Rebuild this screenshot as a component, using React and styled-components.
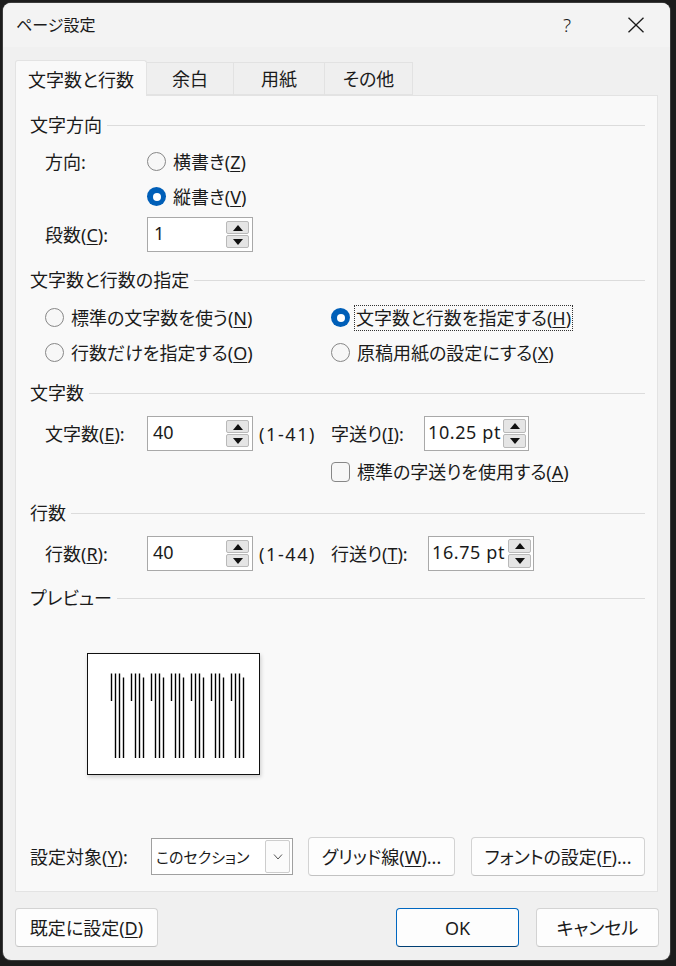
import React from 'react';
import styled, { createGlobalStyle } from 'styled-components';

const GlobalStyle = createGlobalStyle`
  body {
    margin: 0;
    background: #1c1c1c;
    font-family: "Noto Sans", "Noto Sans CJK JP", sans-serif;
    font-feature-settings: "palt" 1;
    color: #1b1b1b;
  }
`;

const Screen = styled.div`
  padding: 3px 0 0 3px;
  height: 966px;
  box-sizing: border-box;
`;

const Dialog = styled.div`
  width: 667px;
  height: 957px;
  background: #f0f0f0;
  border-radius: 8px;
  box-shadow: 0 0 0 1px #3c3c3c;
  display: flex;
  flex-direction: column;
  overflow: hidden;
`;

const TitleBar = styled.div`
  height: 44px;
  display: flex;
  align-items: center;
  padding: 0 11px 0 13px;
  background: #f3f3f3;
  font-size: 16px;
  line-height: 22px;
`;

const Title = styled.div`
  flex: 1;
`;

const TitleButton = styled.div`
  width: 46px;
  height: 44px;
  display: flex;
  align-items: center;
  justify-content: center;
  margin-right: ${(p) => p.$mr || 0}px;
  font-size: 19px;
  font-weight: 300;
`;

const TabRow = styled.div`
  display: flex;
  align-items: flex-end;
  height: 35px;
  margin: 13px 12px 0;
`;

const Tab = styled.div`
  width: ${(p) => p.$w}px;
  height: ${(p) => (p.$active ? 36 : 33)}px;
  margin-bottom: ${(p) => (p.$active ? -1 : 0)}px;
  box-sizing: border-box;
  display: flex;
  align-items: center;
  justify-content: center;
  font-size: 18px;
  line-height: 22px;
  background: ${(p) => (p.$active ? '#f9f9f9' : '#efefef')};
  border: 1px solid ${(p) => (p.$active ? '#e3e3e3' : '#e2e2e2')};
  border-bottom: ${(p) => (p.$active ? 'none' : '1px solid #e3e3e3')};
  border-left: ${(p) => (p.$first ? undefined : p.$active ? undefined : 'none')};
  border-radius: ${(p) => (p.$active ? '3px 3px 0 0' : '0')};
  position: relative;
  z-index: ${(p) => (p.$active ? 1 : 0)};
  padding-top: ${(p) => (p.$active ? 2 : 0)}px;
`;

const Panel = styled.div`
  margin: 0 12px;
  height: 797px;
  box-sizing: border-box;
  background: #f9f9f9;
  border: 1px solid #e3e3e3;
  padding: 17px 12px 15px 14px;
  display: flex;
  flex-direction: column;
  font-size: 18px;
  line-height: 22px;
`;

const Header = styled.div`
  display: flex;
  align-items: center;
  gap: 5px;
  height: 24px;
  margin-top: ${(p) => p.$mt || 0}px;
  &::after {
    content: '';
    flex: 1;
    height: 1px;
    background: #dcdcdc;
  }
`;

const Group = styled.div`
  padding-left: 15px;
  margin-top: ${(p) => p.$mt || 0}px;
  display: flex;
  flex-direction: column;
`;

const Row = styled.div`
  display: flex;
  align-items: center;
  height: 35px;
  margin-top: ${(p) => p.$mt || 0}px;
  padding-left: ${(p) => p.$pl || 0}px;
`;

const Label = styled.div`
  width: ${(p) => p.$w}px;
  flex: none;
  padding-left: ${(p) => p.$pl || 0}px;
  box-sizing: border-box;
  white-space: nowrap;
`;

const U = styled.span`
  text-decoration: underline;
  text-underline-offset: 2px;
  text-decoration-thickness: 1px;
`;

const RadioItem = styled.div`
  display: flex;
  align-items: center;
  gap: ${(p) => p.$gap ?? 7}px;
  width: ${(p) => (p.$w ? `${p.$w}px` : 'auto')};
  white-space: nowrap;
`;

const RadioCircle = styled.span`
  width: 19px;
  height: 19px;
  border-radius: 50%;
  box-sizing: border-box;
  flex: none;
  display: flex;
  align-items: center;
  justify-content: center;
  background: ${(p) => (p.$on ? '#005fb8' : '#f7f7f7')};
  border: ${(p) => (p.$on ? 'none' : '1px solid #878787')};
  &::after {
    content: '';
    display: ${(p) => (p.$on ? 'block' : 'none')};
    width: 8px;
    height: 8px;
    border-radius: 50%;
    background: #fff;
  }
`;

const FocusText = styled.span`
  border: 1px dotted #333;
  padding: 1px;
`;

const CheckBox = styled.span`
  width: 19px;
  height: 20px;
  border-radius: 4px;
  border: 1px solid #878787;
  box-sizing: border-box;
  background: #f7f7f7;
  flex: none;
`;

const SpinBox = styled.div`
  width: ${(p) => p.$w}px;
  height: 35px;
  box-sizing: border-box;
  border: 1px solid #a9a9a9;
  background: #fff;
  display: flex;
  flex: none;
`;

const SpinText = styled.div`
  flex: 1;
  padding-left: ${(p) => p.$pl}px;
  padding-top: 4px;
  font-size: 18px;
  line-height: 22px;
  white-space: nowrap;
  overflow: hidden;
  letter-spacing: ${(p) => p.$ls || 0}px;
`;

const SpinButtons = styled.div`
  width: 23px;
  margin: ${(p) => p.$inset}px ${(p) => p.$inset}px ${(p) => p.$inset}px 0;
  display: flex;
  flex-direction: column;
  gap: 1px;
`;

const SpinButton = styled.div`
  flex: 1;
  background: #e5e5e5;
  border: 1px solid #b9b9b9;
  border-radius: 2px;
  display: flex;
  align-items: center;
  justify-content: center;
  &::after {
    content: '';
    width: 0;
    height: 0;
    border-left: 5px solid transparent;
    border-right: 5px solid transparent;
    ${(p) => (p.$up ? 'border-bottom: 6px solid #111;' : 'border-top: 6px solid #111;')}
  }
`;

const Range = styled.div`
  width: ${(p) => p.$w}px;
  flex: none;
  padding-left: 6px;
  box-sizing: border-box;
  letter-spacing: 1.6px;
`;

const RadioGrid = styled.div`
  display: grid;
  grid-template-columns: 286px 1fr;
  grid-auto-rows: 35px;
  align-items: center;
  padding-left: 15px;
  margin-top: ${(p) => p.$mt || 0}px;
`;

const PreviewPage = styled.div`
  width: 173px;
  height: 122px;
  box-sizing: border-box;
  margin: 43px 0 0 57px;
  background: #fff;
  border: 1px solid #111;
  box-shadow: 1px 2px 4px rgba(0, 0, 0, 0.18);
  display: flex;
`;

const BottomRow = styled.div`
  margin-top: auto;
  height: 39px;
  display: flex;
  align-items: center;
`;

const Select = styled.div`
  width: 142px;
  height: 37px;
  box-sizing: border-box;
  border: 1px solid #a0a0a0;
  background: #fff;
  display: flex;
  align-items: center;
  flex: none;
  font-size: 15px;
`;

const SelectText = styled.div`
  flex: 1;
  padding-left: 4px;
  white-space: nowrap;
`;

const SelectArrow = styled.div`
  width: 25px;
  height: 33px;
  box-sizing: border-box;
  margin-right: 2px;
  border: 1px solid #cdcdcd;
  border-radius: 2px;
  background: #fbfbfb;
  display: flex;
  align-items: center;
  justify-content: center;
`;

const Button = styled.div`
  width: ${(p) => p.$w}px;
  height: 39px;
  margin-left: ${(p) => p.$ml || 0}px;
  box-sizing: border-box;
  flex: none;
  display: flex;
  align-items: center;
  justify-content: center;
  background: #fdfdfd;
  border: 1px solid ${(p) => (p.$primary ? '#0067c0' : '#d3d3d3')};
  border-bottom-color: ${(p) => (p.$primary ? '#003e73' : '#c2c2c2')};
  border-radius: 4px;
  font-size: 18px;
  line-height: 22px;
  white-space: nowrap;
`;

const Footer = styled.div`
  display: flex;
  align-items: center;
  padding: 16px 11px 0 12px;
`;

const Spacer = styled.div`
  flex: 1;
`;

const Radio = ({ on, label, focus, w, gap }) => (
  <RadioItem $w={w} $gap={gap}>
    <RadioCircle $on={on} />
    {focus ? <FocusText>{label}</FocusText> : <span>{label}</span>}
  </RadioItem>
);

const Spin = ({ value, w = 106, pl = 4, inset = 3, ls }) => (
  <SpinBox $w={w}>
    <SpinText $pl={pl} $ls={ls}>{value}</SpinText>
    <SpinButtons $inset={inset}>
      <SpinButton $up />
      <SpinButton />
    </SpinButtons>
  </SpinBox>
);

const PreviewLines = () => {
  const lines = [];
  for (let g = 0; g < 7; g++) {
    const x0 = 23.5 + g * 20;
    lines.push(<line key={`${g}a`} x1={x0} y1={19.5} x2={x0} y2={47} />);
    lines.push(<line key={`${g}b`} x1={x0 + 4} y1={19.5} x2={x0 + 4} y2={104} />);
    lines.push(<line key={`${g}c`} x1={x0 + 8} y1={19.5} x2={x0 + 8} y2={104} />);
    lines.push(<line key={`${g}d`} x1={x0 + 12} y1={23.5} x2={x0 + 12} y2={104} />);
  }
  return (
    <svg width="171" height="120" stroke="#000" strokeWidth="1.4">
      {lines}
    </svg>
  );
};

const App = () => {
  return (
    <Screen>
      <GlobalStyle />
      <Dialog>
        <TitleBar>
          <Title>ページ設定</Title>
          <TitleButton $mr={23}>?</TitleButton>
          <TitleButton>
            <svg width="18" height="16" viewBox="0 0 18 16" stroke="#1b1b1b" strokeWidth="1.3">
              <line x1="1.5" y1="0.8" x2="16.5" y2="15.2" />
              <line x1="16.5" y1="0.8" x2="1.5" y2="15.2" />
            </svg>
          </TitleButton>
        </TitleBar>

        <TabRow>
          <Tab $w={132} $active $first>文字数と行数</Tab>
          <Tab $w={87}>余白</Tab>
          <Tab $w={91}>用紙</Tab>
          <Tab $w={88}>その他</Tab>
        </TabRow>

        <Panel>
          <Header>文字方向</Header>
          <Group $mt={7}>
            <Row>
              <Label $w={102}>方向:</Label>
              <Radio label={<>横書き(<U>Z</U>)</>} />
            </Row>
            <Row>
              <Label $w={102} />
              <Radio on label={<>縦書き(<U>V</U>)</>} />
            </Row>
            <Row $mt={3}>
              <Label $w={102}>段数(<U>C</U>):</Label>
              <Spin value="1" pl={6} />
            </Row>
          </Group>

          <Header $mt={16}>文字数と行数の指定</Header>
          <RadioGrid $mt={8}>
            <Radio label={<>標準の文字数を使う(<U>N</U>)</>} />
            <Radio on focus gap={4} label={<>文字数と行数を指定する(<U>H</U>)</>} />
            <Radio label={<>行数だけを指定する(<U>O</U>)</>} />
            <Radio label={<>原稿用紙の設定にする(<U>X</U>)</>} />
          </RadioGrid>

          <Header $mt={11}>文字数</Header>
          <Group $mt={11}>
            <Row>
              <Label $w={102}>文字数(<U>E</U>):</Label>
              <Spin value="40" pl={5} />
              <Range $w={78}>(1-41)</Range>
              <Label $w={93}>字送り(<U>I</U>):</Label>
              <Spin value="10.25 pt" w={105} pl={3} inset={2} ls={0.6} />
            </Row>
            <Row $mt={3} $pl={286}>
              <RadioItem>
                <CheckBox />
                <span>標準の字送りを使用する(<U>A</U>)</span>
              </RadioItem>
            </Row>
          </Group>

          <Header $mt={12}>行数</Header>
          <Group $mt={11}>
            <Row>
              <Label $w={102}>行数(<U>R</U>):</Label>
              <Spin value="40" pl={5} />
              <Range $w={78}>(1-44)</Range>
              <Label $w={97}>行送り(<U>T</U>):</Label>
              <Spin value="16.75 pt" w={106} pl={3} inset={2} ls={0.6} />
            </Row>
          </Group>

          <Header $mt={15}>プレビュー</Header>
          <PreviewPage>
            <PreviewLines />
          </PreviewPage>

          <BottomRow>
            <Label $w={121}>設定対象(<U>Y</U>):</Label>
            <Select>
              <SelectText>このセクション</SelectText>
              <SelectArrow>
                <svg width="10" height="6" viewBox="0 0 10 6" fill="none" stroke="#555" strokeWidth="1">
                  <polyline points="1,0.5 5,5 9,0.5" />
                </svg>
              </SelectArrow>
            </Select>
            <Button $w={147} $ml={15}>グリッド線(<U>W</U>)...</Button>
            <Button $w={174} $ml={16}>フォントの設定(<U>F</U>)...</Button>
          </BottomRow>
        </Panel>

        <Footer>
          <Button $w={143}>既定に設定(<U>D</U>)</Button>
          <Spacer />
          <Button $w={123} $primary>OK</Button>
          <Button $w={123} $ml={17}>キャンセル</Button>
        </Footer>
      </Dialog>
    </Screen>
  );
};

export default App;
